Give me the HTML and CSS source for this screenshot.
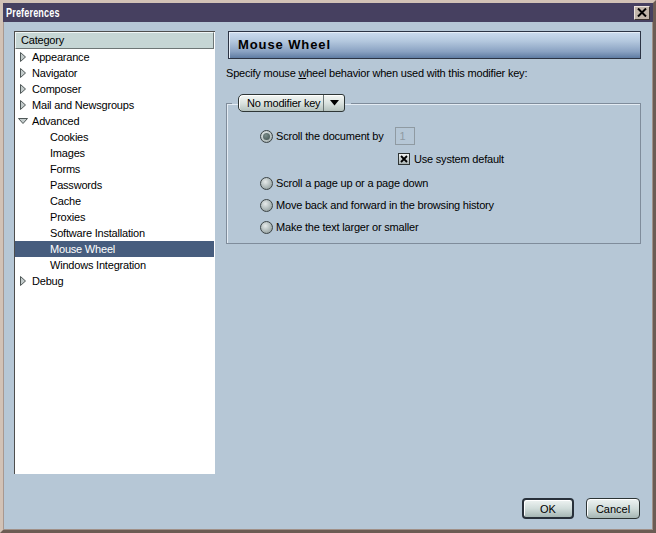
FILE: index.html
```html
<!DOCTYPE html>
<html>
<head>
<meta charset="utf-8">
<title>Preferences</title>
<link rel="stylesheet" href="styles.css">
</head>
<body>
<div class="window">
  <div class="titlebar">
    <span class="title">Preferences</span>
    <span class="close"><svg width="10" height="9" viewBox="0 0 10 9"><path d="M1 0.5 L9 8.5 M9 0.5 L1 8.5" stroke="#000" stroke-width="2"/></svg></span>
  </div>
  <div class="content">
    <div class="main">
      <div class="tree">
        <div class="tree-head">Category</div>
        <div class="row top"><svg class="arrow" width="8" height="10" viewBox="0 0 8 10"><path d="M1.5 0.5 L6.5 5 L1.5 9.5 Z" fill="#c3cbcb" stroke="#4f5858"/></svg>Appearance</div>
        <div class="row top"><svg class="arrow" width="8" height="10" viewBox="0 0 8 10"><path d="M1.5 0.5 L6.5 5 L1.5 9.5 Z" fill="#c3cbcb" stroke="#4f5858"/></svg>Navigator</div>
        <div class="row top"><svg class="arrow" width="8" height="10" viewBox="0 0 8 10"><path d="M1.5 0.5 L6.5 5 L1.5 9.5 Z" fill="#c3cbcb" stroke="#4f5858"/></svg>Composer</div>
        <div class="row top"><svg class="arrow" width="8" height="10" viewBox="0 0 8 10"><path d="M1.5 0.5 L6.5 5 L1.5 9.5 Z" fill="#c3cbcb" stroke="#4f5858"/></svg>Mail and Newsgroups</div>
        <div class="row top open"><svg class="arrow down" width="10" height="8" viewBox="0 0 10 8"><path d="M0.5 1.5 L9.5 1.5 L5 6.5 Z" fill="#c3cbcb" stroke="#4f5858"/></svg>Advanced</div>
        <div class="row child">Cookies</div>
        <div class="row child">Images</div>
        <div class="row child">Forms</div>
        <div class="row child">Passwords</div>
        <div class="row child">Cache</div>
        <div class="row child">Proxies</div>
        <div class="row child">Software Installation</div>
        <div class="row child selected">Mouse Wheel</div>
        <div class="row child">Windows Integration</div>
        <div class="row top"><svg class="arrow" width="8" height="10" viewBox="0 0 8 10"><path d="M1.5 0.5 L6.5 5 L1.5 9.5 Z" fill="#c3cbcb" stroke="#4f5858"/></svg>Debug</div>
      </div>
      <div class="pane">
        <div class="pane-head">Mouse Wheel</div>
        <div class="desc">Specify mouse <u>w</u>heel behavior when used with this modifier key:</div>
        <fieldset class="group">
          <legend class="legend">
            <span class="menu"><span class="menu-label">No modifier key</span><span class="menu-drop"><svg width="9" height="6" viewBox="0 0 9 6"><path d="M0 0 L9 0 L4.5 5.5 Z" fill="#000"/></svg></span></span>
          </legend>
          <div class="options">
            <div class="opt first">
              <span class="radio checked"><span class="dot"></span></span>
              <span class="label">Scroll the document by</span>
              <span class="numbox">1</span>
            </div>
            <div class="opt check-row">
              <span class="checkbox"><svg width="8" height="8" viewBox="0 0 8 8"><path d="M1 1 L7 7 M7 1 L1 7" stroke="#000" stroke-width="1.8"/></svg></span>
              <span class="label">Use system default</span>
            </div>
            <div class="opt spaced">
              <span class="radio"></span>
              <span class="label">Scroll a page up or a page down</span>
            </div>
            <div class="opt">
              <span class="radio"></span>
              <span class="label">Move back and forward in the browsing history</span>
            </div>
            <div class="opt">
              <span class="radio"></span>
              <span class="label">Make the text larger or smaller</span>
            </div>
          </div>
        </fieldset>
      </div>
    </div>
    <div class="buttons">
      <button class="btn default">OK</button>
      <button class="btn">Cancel</button>
    </div>
  </div>
</div>
</body>
</html>
```
FILE: styles.css
```css
* { box-sizing: border-box; }
html, body {
  margin: 0;
  padding: 0;
  background: #b6c7d6;
}
body {
  font-family: "Liberation Sans", Arial, sans-serif;
  font-size: 11px;
  letter-spacing: -0.2px;
  color: #000;
}
.window {
  width: 656px;
  height: 533px;
  border-style: solid;
  border-width: 3px;
  border-color: #d2c2b6 #6c5c54 #6c5c54 #d2c2b6;
  box-shadow: inset 1px 1px 0 #a89890, inset -1px -1px 0 #a09088;
  background: #b6c7d6;
  display: flex;
  flex-direction: column;
}
.titlebar {
  height: 19px;
  background: #464060;
  display: flex;
  align-items: center;
  justify-content: space-between;
  padding: 0 3px 0 3px;
}
.title {
  color: #fff;
  font-weight: bold;
  font-size: 13px;
  display: inline-block;
  transform: scaleX(0.7);
  transform-origin: left center;
  letter-spacing: 0.2px;
}
.close {
  width: 16px;
  height: 14px;
  background: #c2b6aa;
  border: 1px solid;
  border-color: #ece4dc #3c3430 #3c3430 #ece4dc;
  display: flex;
  align-items: center;
  justify-content: center;
}
.content {
  flex: 1;
  padding: 9px 12px 0 11px;
  display: flex;
  flex-direction: column;
}
.main {
  display: flex;
  gap: 11px;
  height: 444px;
}
.tree {
  width: 201px;
  height: 443px;
  background: #fff;
  border-left: 1px solid #4e4e4e;
  border-top: 1px solid #4e4e4e;
  display: flex;
  flex-direction: column;
}
.tree-head {
  height: 17px;
  background: #c6d6d5;
  border: 1px solid;
  border-color: #f0f6f6 #6e7676 #6e7676 #f0f6f6;
  padding-left: 5px;
  line-height: 15px;
  margin-right: 1px;
}
.row {
  height: 16px;
  line-height: 16px;
  display: flex;
  align-items: center;
  white-space: nowrap;
  margin-right: 1px;
}
.row.top { padding-left: 4px; }
.arrow { margin-right: 5px; flex: none; }
.arrow.down { margin-left: -1px; margin-right: 4px; }
.row.child { padding-left: 35px; }
.row.selected {
  background: #475d7e;
  color: #fff;
}
.pane {
  width: 415px;
  display: flex;
  flex-direction: column;
}
.pane-head {
  margin-left: 2px;
  height: 28px;
  border: 1px solid #2c3444;
  background: linear-gradient(#ccdcee 0%, #b4c8de 35%, #8aa2c2 75%, #5f7ca3 100%);
  box-shadow: inset 1px 1px 0 #e6eef8;
  font-weight: bold;
  font-size: 13px;
  letter-spacing: 0.9px;
  padding-left: 9px;
  line-height: 26px;
}
.desc {
  margin-top: 7px;
  line-height: 14px;
}
.desc u { text-decoration-thickness: 1px; text-underline-offset: 1px; }
.group {
  margin: 14px 0 0 0;
  padding: 0 0 0 5px;
  min-width: 0;
  border: 1px solid #7f8c9b;
  box-shadow: 1px 1px 0 #e4ecf4 inset;
  height: 150px;
}
.legend {
  padding: 0 6px;
  height: 18px;
}
.menu {
  display: flex;
  height: 18px;
  border: 1px solid #2e3636;
  border-radius: 5px 3px 3px 5px;
  background: linear-gradient(#f4f7f4, #dbe3e0 50%, #b5c2be);
  box-shadow: inset 1px 1px 0 #ffffff;
}
.menu-label {
  padding: 0 3px 0 8px;
  line-height: 16px;
}
.menu-drop {
  width: 21px;
  border-left: 1px solid #6a7474;
  display: flex;
  align-items: center;
  justify-content: center;
}
.options {
  padding: 15px 0 0 28px;
  display: flex;
  flex-direction: column;
  gap: 4px;
}
.opt {
  height: 18px;
  display: flex;
  align-items: center;
}
.opt.check-row { margin-top: 1px; }
.opt.spaced { margin-top: 2px; }
.radio {
  width: 13px;
  height: 13px;
  border-radius: 50%;
  border: 1px solid #3c4446;
  background: radial-gradient(circle at 40% 35%, #e6eaea 0%, #b8c2c2 45%, #849090 100%);
  margin-right: 3px;
  display: flex;
  align-items: center;
  justify-content: center;
  flex: none;
}
.radio.checked {
  background: radial-gradient(circle at 40% 35%, #e4eaea 0%, #b8c2c2 60%, #8c9898 100%);
}
.dot {
  width: 7px;
  height: 7px;
  border-radius: 50%;
  background: radial-gradient(circle at 40% 35%, #7a8c8a, #3e4e4c);
}
.label { white-space: nowrap; }
.numbox {
  width: 20px;
  height: 18px;
  margin-left: 11px;
  border: 1px solid #8f9aa2;
  color: #8f9aa2;
  padding-left: 4px;
  line-height: 16px;
}
.check-row { padding-left: 138px; }
.checkbox {
  width: 12px;
  height: 12px;
  border: 1px solid #2e3434;
  background: linear-gradient(#f0f2f2, #aab4b4);
  display: flex;
  align-items: center;
  justify-content: center;
  margin-right: 4px;
  flex: none;
}
.buttons {
  margin-top: 23px;
  display: flex;
  justify-content: flex-end;
  gap: 12px;
  padding-right: 1px;
}
.btn {
  font-family: "Liberation Sans", Arial, sans-serif;
  font-size: 11px;
  color: #000;
  height: 21px;
  border: 1px solid #2c3434;
  border-radius: 4px;
  background: linear-gradient(#eef3f2, #d0dcda 50%, #a6b6b4);
  box-shadow: inset 1px 1px 0 #fff;
  padding: 0;
  width: 54px;
}
.btn.default {
  width: 52px;
  border: 2px solid #28303a;
}
```
